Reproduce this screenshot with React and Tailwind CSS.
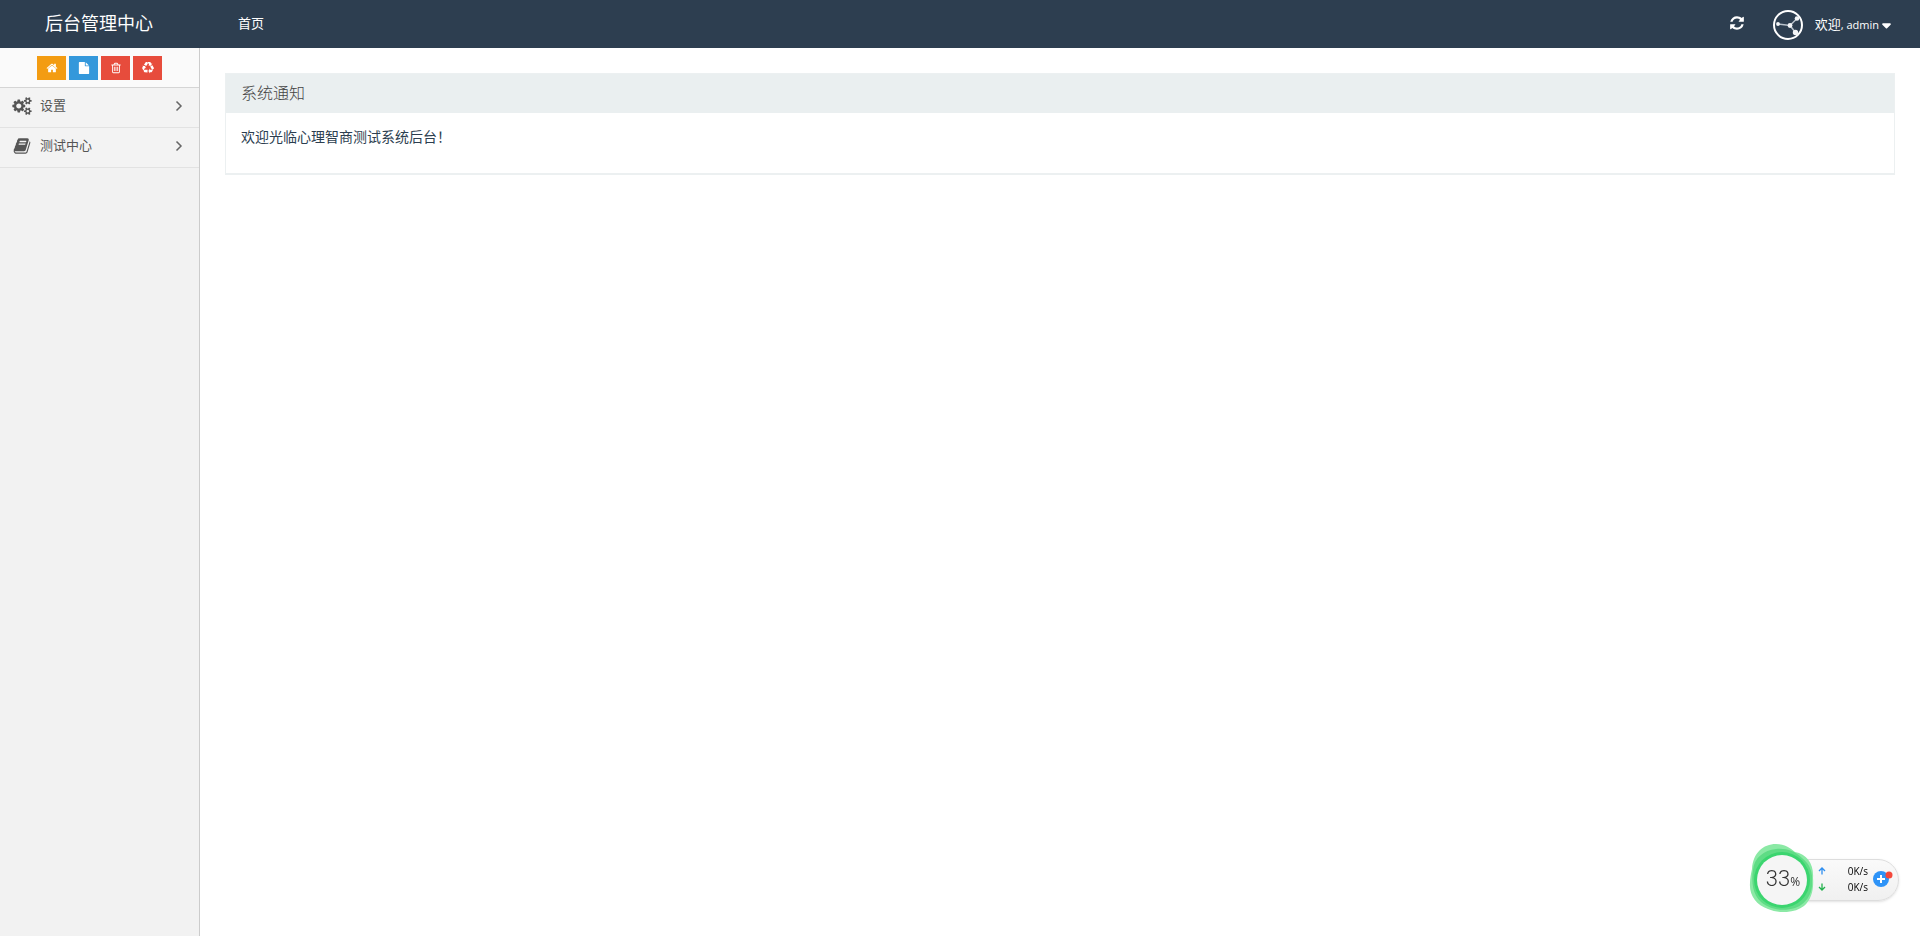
import React from "react";
import { FaCaretDown } from "react-icons/fa6";

const PATHS = {
  refresh:
    "M1639 1056q0 5-1 7-64 268-268 434.5t-478 166.5q-146 0-282.5-55t-243.5-157l-129 129q-19 19-45 19t-45-19-19-45v-448q0-26 19-45t45-19h448q26 0 45 19t19 45-19 45l-137 137q71 66 161 102t187 36q134 0 250-65t186-179q11-17 53-117 8-23 30-23h192q13 0 22.5 9.5t9.5 22.5zm25-800v448q0 26-19 45t-45 19h-448q-26 0-45-19t-19-45 19-45l138-138q-148-137-349-137-134 0-250 65t-186 179q-11 17-53 117-8 23-30 23h-199q-13 0-22.5-9.5t-9.5-22.5v-7q65-268 270-434.5t480-166.5q146 0 284 55.5t245 156.5l130-129q19-19 45-19t45 19 19 45z",
  home: "M1472 992v480q0 26-19 45t-45 19h-384v-384h-256v384h-384q-26 0-45-19t-19-45v-480q0-1 .5-3t.5-3l575-474 575 474q1 2 1 6zm223-69l-62 74q-8 9-21 11h-3q-13 0-21-7l-692-577-692 577q-12 8-24 7-13-2-21-11l-62-74q-8-10-7-23.5t11-21.5l719-599q32-26 76-26t76 26l244 204v-195q0-14 9-23t23-9h192q14 0 23 9t9 23v408l219 182q10 8 11 21.5t-7 23.5z",
  file: "M1152 512v-472q22 14 36 28l408 408q14 14 28 36h-472zm-128 32q0 40 28 68t68 28h544v1056q0 40-28 68t-68 28h-1344q-40 0-68-28t-28-68v-1600q0-40 28-68t68-28h800v544z",
  trash:
    "M704 736v576q0 14-9 23t-23 9h-64q-14 0-23-9t-9-23v-576q0-14 9-23t23-9h64q14 0 23 9t9 23zm256 0v576q0 14-9 23t-23 9h-64q-14 0-23-9t-9-23v-576q0-14 9-23t23-9h64q14 0 23 9t9 23zm256 0v576q0 14-9 23t-23 9h-64q-14 0-23-9t-9-23v-576q0-14 9-23t23-9h64q14 0 23 9t9 23zm128 724v-948h-896v948q0 22 7 40.5t14.5 27 10.5 8.5h832q3 0 10.5-8.5t14.5-27 7-40.5zm-672-1076h448l-48-117q-7-9-17-11h-317q-10 2-17 11zm928 32v64q0 14-9 23t-23 9h-96v948q0 83-47 143.5t-113 60.5h-832q-66 0-113-58.5t-47-141.5v-952h-96q-14 0-23-9t-9-23v-64q0-14 9-23t23-9h309l70-167q15-37 54-63t79-26h320q40 0 79 26t54 63l70 167h309q14 0 23 9t9 23z",
  recycle:
    "M836 1169l-15 368-2 22-420-29q-36-3-67-31.5t-47-65.5q-11-27-14.5-55t4-65 12-55 21.5-64 19-53q78 12 509 28zm-387-586l180 379-147-92q-63 72-111.5 144.5t-72.5 125-39.5 94.5-18.5 63l-4 21-190-357q-17-26-18-56t6-47l8-18q35-63 114-188l-140-86zm1231 517l-188 359q-12 29-36.5 46.5t-43.5 20.5l-18 4q-71 7-219 12l8 164-230-367 211-362 7 173q170 16 283 5t170-33zm-785-924q-47 63-265 435l-317-187-19-12 225-356q20-31 60-45t80-10q24 2 48.5 12t42 21 41.5 33 36 34.5 36 39.5 32 35zm655 307l212 363q18 37 12.5 76t-27.5 74q-13 20-33 37t-38 28-48.5 22-47 16-51.5 14-46 12q-34-72-265-436l313-195zm-143-226l142-83-220 373-419-20 151-86q-34-89-75-166t-75.5-123.5-64.5-80-47-46.5l-17-13 405 1q31-3 58 10.5t39 28.5l11 15q39 61 112 190z",
  cogs: "M896 896q0-106-75-181t-181-75-181 75-75 181 75 181 181 75 181-75 75-181zm768 512q0-52-38-90t-90-38-90 38-38 90q0 53 37.5 90.5t90.5 37.5 90.5-37.5 37.5-90.5zm0-1024q0-52-38-90t-90-38-90 38-38 90q0 53 37.5 90.5t90.5 37.5 90.5-37.5 37.5-90.5zm-384 421v185q0 10-7 19.5t-16 10.5l-155 24q-11 35-32 76 34 48 90 115 7 11 7 20 0 12-7 19-23 30-82.5 89.5t-78.5 59.5q-11 0-21-7l-115-90q-37 19-77 31-11 108-23 155-7 24-30 24h-186q-11 0-20-7.5t-10-17.5l-23-153q-34-10-75-31l-118 89q-7 7-20 7-11 0-21-8-144-133-144-160 0-9 7-19 10-14 41-53t47-61q-23-44-35-82l-152-24q-10-1-17-9.5t-7-19.5v-185q0-10 7-19.5t16-10.5l155-24q11-35 32-76-34-48-90-115-7-11-7-20 0-12 7-20 22-30 82-89t79-59q11 0 21 7l115 90q34-18 77-32 11-108 23-154 7-24 30-24h186q11 0 20 7.5t10 17.5l23 153q34 10 75 31l118-89q8-7 20-7 11 0 21 8 144 133 144 160 0 8-7 19-12 16-42 54t-45 60q23 48 34 82l152 23q10 2 17 10.5t7 19.5zm640 533v140q0 16-149 31-12 27-30 52 51 113 51 138 0 4-4 7-122 71-124 71-8 0-46-47t-52-68q-20 2-30 2t-30-2q-14 21-52 68t-46 47q-2 0-124-71-4-3-4-7 0-25 51-138-18-25-30-52-149-15-149-31v-140q0-16 149-31 13-29 30-52-51-113-51-138 0-4 4-7 4-2 35-20t59-34 30-16q8 0 46 46.5t52 67.5q20-2 30-2t30 2q51-71 92-112l6-2q4 0 124 70 4 3 4 7 0 25-51 138 17 23 30 52 149 15 149 31zm0-1024v140q0 16-149 31-12 27-30 52 51 113 51 138 0 4-4 7-122 71-124 71-8 0-46-47t-52-68q-20 2-30 2t-30-2q-14 21-52 68t-46 47q-2 0-124-71-4-3-4-7 0-25 51-138-18-25-30-52-149-15-149-31v-140q0-16 149-31 13-29 30-52-51-113-51-138 0-4 4-7 4-2 35-20t59-34 30-16q8 0 46 46.5t52 67.5q20-2 30-2t30 2q51-71 92-112l6-2q4 0 124 70 4 3 4 7 0 25-51 138 17 23 30 52 149 15 149 31z",
  book: "M1703 478q40 57 18 129l-275 906q-19 64-76.5 107.5t-122.5 43.5h-923q-77 0-148.5-53.5t-99.5-131.5q-24-67-2-127 0-4 3-27t4-37q1-8-3-21.5t-3-19.5q2-11 8-21t16.5-23.5 16.5-23.5q23-38 45-91.5t30-91.5q3-10 .5-30t-.5-28q3-11 17-28t17-23q21-36 42-92t25-90q1-9-2.5-32t.5-28q4-13 22-30.5t22-22.5q19-26 42.5-84.5t27.5-96.5q1-8-3-25.5t-2-26.5q2-8 9-18t18-23 17-21q8-12 16.5-30.5t15-35 16-36 19.5-32 26.5-23.5 36-11.5 47.5 5.5l-1 3q38-9 51-9h761q74 0 114 56t18 130l-274 906q-36 119-71.5 153.5t-128.5 34.5h-869q-27 0-38 15-11 16-1 43 24 70 144 70h923q29 0 56-15.5t35-41.5l300-987q7-22 5-57 38 15 59 43zm-1064 2q-4 13 2 22.5t20 9.5h608q13 0 25.5-9.5t16.5-22.5l21-64q4-13-2-22.5t-20-9.5h-608q-13 0-25.5 9.5t-16.5 22.5zm-83 256q-4 13 2 22.5t20 9.5h608q13 0 25.5-9.5t16.5-22.5l21-64q4-13-2-22.5t-20-9.5h-608q-13 0-25.5 9.5t-16.5 22.5z",
};

function Glyph({ name, className, viewBox = "0 0 1792 1792" }) {
  return (
    <svg viewBox={viewBox} fill="currentColor" className={className} aria-hidden="true">
      <path d={PATHS[name]} />
    </svg>
  );
}

function Avatar() {
  return (
    <svg viewBox="0 0 30 30" className="size-[30px]" aria-hidden="true">
      <circle cx="15" cy="15" r="14" fill="none" stroke="#fff" strokeWidth="2" />
      <path d="M5 14L17 15.5L24 8.5M17 15.5L22.5 22.5" fill="none" stroke="#b9c2cb" strokeWidth="1.5" />
      <circle cx="5" cy="14" r="1.9" fill="#f4f6f8" />
      <circle cx="17" cy="15.5" r="2.4" fill="#f4f6f8" />
      <circle cx="24" cy="8.5" r="2.3" fill="#f4f6f8" />
      <circle cx="22.5" cy="22.5" r="2.7" fill="#f4f6f8" />
    </svg>
  );
}

function TopBar() {
  return (
    <header className="flex h-12 shrink-0 items-center bg-[#2d3e50] text-white">
      <h1 className="w-[198px] pb-0.5 text-center text-lg leading-6">后台管理中心</h1>
      <nav className="flex-1 pb-0.5 pl-10">
        <a href="#home" className="block text-[13px] leading-5">首页</a>
      </nav>
      <button type="button" aria-label="刷新" className="mr-7 pb-0.5">
        <Glyph name="refresh" className="size-4" />
      </button>
      <button type="button" className="mr-7 flex items-center pt-px">
        <Avatar />
        <span className="ml-3 text-[11px] leading-5">
          <span className="text-[13px]">欢迎</span>, admin
        </span>
        <FaCaretDown className="ml-0.5 h-[14px] w-[11px]" />
      </button>
    </header>
  );
}

const SHORTCUTS = [
  { icon: "home", label: "首页", color: "bg-[#f39c12]" },
  { icon: "file", label: "文件", color: "bg-[#3498db]" },
  { icon: "trash", label: "删除", color: "bg-[#e74c3c]" },
  { icon: "recycle", label: "回收", color: "bg-[#e74c3c]" },
];

function ShortcutBar() {
  return (
    <div className="flex h-10 items-center justify-center gap-[3px] border-b border-[#d5d5d5] bg-[#fafafa] text-white">
      {SHORTCUTS.map(({ icon, label, color }) => (
        <button
          key={icon}
          type="button"
          aria-label={label}
          className={`flex h-6 w-[29px] items-center justify-center ${color}`}
        >
          <Glyph name={icon} className="size-3" />
        </button>
      ))}
    </div>
  );
}

function MenuItem({ icon, viewBox, label }) {
  return (
    <li className="border-b border-[#e2e2e2]">
      <a href="#menu" className="flex h-[39px] items-center bg-[#f3f3f3] pr-4 pb-[3px] pl-3 text-[#555]">
        <Glyph name={icon} viewBox={viewBox} className="h-[18px] w-5" />
        <span className="ml-2 flex-1 pb-0.5 text-[13px] leading-5">{label}</span>
        <svg viewBox="0 0 8 12" className="h-3 w-2" fill="none" stroke="#666" strokeWidth="1.5" aria-hidden="true">
          <path d="M1.5 1.5L6 6L1.5 10.5" />
        </svg>
      </a>
    </li>
  );
}

function Sidebar() {
  return (
    <aside className="w-[200px] shrink-0 border-r border-[#ccc] bg-[#f2f2f2]">
      <ShortcutBar />
      <ul>
        <MenuItem icon="cogs" viewBox="0 0 1920 1792" label="设置" />
        <MenuItem icon="book" label="测试中心" />
      </ul>
    </aside>
  );
}

function Arrow({ down = false }) {
  return (
    <svg viewBox="0 0 8 8" className="size-2" fill="none" stroke="currentColor" strokeWidth="1.3" aria-hidden="true">
      <path d={down ? "M4 .5v6.5M1 4l3 3l3-3" : "M4 7.5v-6.5M1 4l3-3l3 3"} />
    </svg>
  );
}

function SpeedWidget() {
  return (
    <div className="fixed right-[21px] bottom-6 flex h-[68px] items-center">
      <div className="relative z-10 size-[68px]">
        <svg viewBox="0 0 68 68" className="size-[68px]" aria-hidden="true">
          <path d="M3 25C4 9 14 0 27 0C36 0 41 4 46 8C58 10 65 20 64 34C65 46 62 56 55 62C46 69 30 70 19 65C7 61 0 51 1 39C1 34 2 30 3 25Z" fill="#8be9a5" />
          <path d="M4 26C5 14 15 6 27 5C37 4 46 7 53 14C61 20 64 29 63 38C64 50 56 61 46 64C33 68 20 65 12 58C4 51 2 38 4 26Z" fill="#5fdc85" />
          <circle cx="33" cy="36" r="28" fill="#3bd56f" />
          <circle cx="33" cy="36" r="25" fill="#f5f5f5" />
        </svg>
        <div className="absolute inset-x-0 top-[19px] flex items-baseline justify-center text-[#333]">
          <span className="font-['Roboto',sans-serif] text-[22px] leading-8 font-light">33</span>
          <span className="text-xs leading-8">%</span>
        </div>
      </div>
      <div className="mt-1 -ml-[19px] flex h-[42px] w-[101px] items-center rounded-r-full border border-[#ddd] bg-linear-to-b from-[#fafafa] to-[#f0f0f0] pb-[3px] pl-[19px] shadow-sm">
        <dl className="w-[50px] text-[10px] leading-4 text-black">
          <div className="flex items-center justify-between">
            <dt className="text-[#2f8ff0]"><Arrow /></dt>
            <dd>0K/s</dd>
          </div>
          <div className="flex items-center justify-between">
            <dt className="text-[#22b14c]"><Arrow down /></dt>
            <dd>0K/s</dd>
          </div>
        </dl>
        <button type="button" aria-label="加速" className="ml-1">
          <svg viewBox="0 0 22 18" className="h-[18px] w-[22px]" aria-hidden="true">
            <circle cx="9" cy="9" r="8" fill="#2e93f7" />
            <path d="M9 5v8M5 9h8" stroke="#fff" strokeWidth="2" />
            <circle cx="17" cy="5" r="3.5" fill="#f4483b" />
          </svg>
        </button>
      </div>
    </div>
  );
}

export default function App() {
  return (
    <div className="flex min-h-screen flex-col bg-white font-['Open_Sans','Noto_Sans_CJK_SC',sans-serif]">
      <TopBar />
      <div className="flex flex-1">
        <Sidebar />
        <main className="min-w-0 flex-1 p-[25px]">
          <section className="border border-b-2 border-[#ecf0f1]">
            <h2 className="bg-[#eaeff0] px-[15px] pt-[7px] pb-2 text-base leading-6 font-light text-[#444]">系统通知</h2>
            <p className="px-[15px] pt-[13px] pb-[25px] text-sm leading-[22px] text-[#2c3e50]">
              欢迎光临心理智商测试系统后台！
            </p>
          </section>
        </main>
      </div>
      <SpeedWidget />
    </div>
  );
}
